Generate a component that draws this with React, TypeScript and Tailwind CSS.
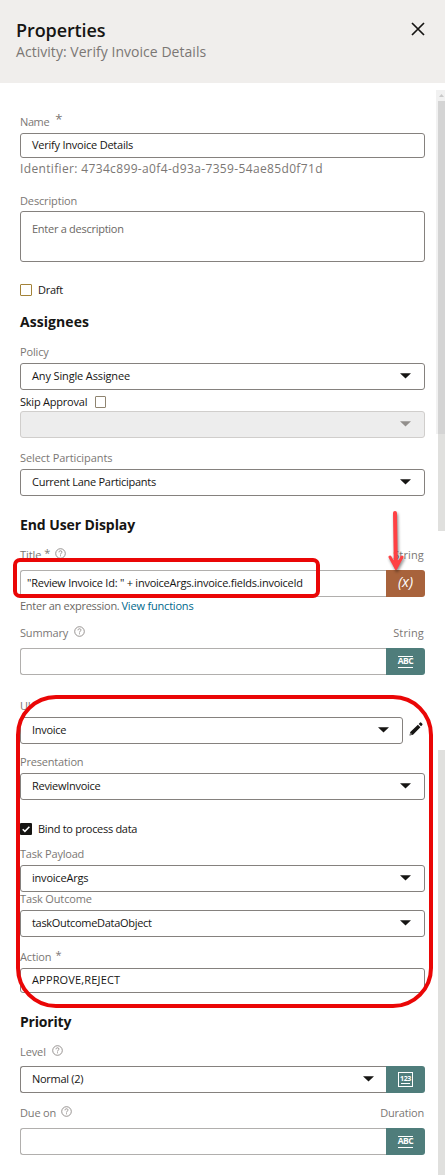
import type { ReactNode } from "react";
import clsx from "clsx";

function HelpIcon({ className }: { className?: string }) {
  return (
    <svg className={clsx("block h-[11px] w-[11px] shrink-0", className)} viewBox="0 0 11 11" fill="none" stroke="#85817e">
      <circle cx="5.5" cy="5.5" r="4.8" strokeWidth="0.85" />
      <path d="M4 4.3C4 3.3 4.6 2.8 5.5 2.8S7 3.3 7 4.1C7 5.1 5.5 5.2 5.5 6.5M5.5 7.3V8.3" strokeWidth="0.85" />
    </svg>
  );
}

function Caret({ className }: { className?: string }) {
  return (
    <svg className={clsx("block h-[6px] w-[11px] shrink-0", className)} viewBox="0 0 11 6" fill="currentColor">
      <path d="M0 0.2H11L5.5 5.6Z" />
    </svg>
  );
}

function Label({ children, className, type }: { children: ReactNode; className: string; type?: ReactNode }) {
  return (
    <div className={clsx("flex shrink-0 items-center justify-between text-[#7b7774]", className)}>
      <span className="flex items-center">{children}</span>
      {type && <span className="pr-[1px]">{type}</span>}
    </div>
  );
}

function Star({ className }: { className: string }) {
  return <span className={clsx("-mt-[5px] leading-none", className)}>*</span>;
}

function Field({ children, className }: { children?: ReactNode; className?: string }) {
  return (
    <div className={clsx("flex shrink-0 items-center rounded-[3px] border border-[#85817e] bg-white pb-[2px] pl-[11px]", className)}>
      {children}
    </div>
  );
}

function Select({ children, className }: { children?: ReactNode; className?: string }) {
  return (
    <Field className={clsx("h-[27px] justify-between pr-[13px]", className)}>
      <span>{children}</span>
      <Caret />
    </Field>
  );
}

function Badge({ children, className }: { children: ReactNode; className: string }) {
  return (
    <div className={clsx("flex h-[27px] w-[39px] shrink-0 items-center justify-center rounded-r-[3px]", className)}>
      {children}
    </div>
  );
}

function AbcBadge() {
  return (
    <Badge className="bg-[#4f7d7b]">
      <div className="flex h-[12px] w-[15px] items-center justify-center border-y border-white pb-px text-[8.5px] leading-none font-bold tracking-[-0.5px] text-white">
        ABC
      </div>
    </Badge>
  );
}

function Heading({ children, className }: { children: ReactNode; className: string }) {
  return <h2 className={clsx("flex shrink-0 items-center text-[14px] font-bold", className)}>{children}</h2>;
}

export default function App() {
  return (
    <div className="relative flex h-[1175px] w-[445px] flex-col overflow-hidden bg-white font-['Open_Sans','Noto_Sans',sans-serif] text-[11px] leading-[14px] tracking-[-0.27px] whitespace-nowrap text-[#161513]">
      <header className="flex h-[83px] shrink-0 items-start justify-between bg-[#f0eeec] pr-[20px] pl-[16px]">
        <div className="pt-[18px]">
          <h1 className="text-[18px] leading-[24px] font-semibold tracking-[-0.1px]">Properties</h1>
          <p className="mt-px text-[14px] leading-[18px] tracking-[0.04px] text-[#7b7774]">Activity: Verify Invoice Details</p>
        </div>
        <svg className="mt-[22px] h-[14px] w-[14px]" viewBox="0 0 14 14" stroke="#161513" strokeWidth="1.7">
          <path d="M1 1L13 13M13 1L1 13" />
        </svg>
      </header>

      <div className="flex h-[1092px]">
        <main className="ml-[20px] flex w-[405px] shrink-0 flex-col">
          <Label className="mt-[28px] h-[22px]">
            <span className="tracking-[-0.4px]">Name</span>
            <Star className="ml-[6px] text-[13px]" />
          </Label>
          <Field className="h-[25px] tracking-[-0.23px]">Verify Invoice Details</Field>
          <div className="flex h-[22px] shrink-0 items-center text-[12px] tracking-[0.35px] text-[#7b7774]">
            Identifier: 4734c899-a0f4-d93a-7359-54ae85d0f71d
          </div>

          <Label className="mt-[11px] h-[20px] tracking-[-0.14px]">Description</Label>
          <Field className="h-[51px] items-start pt-[10px] text-[#6b6764]">Enter a description</Field>

          <div className="mt-[22px] flex h-[12px] shrink-0 items-center">
            <span className="h-[12px] w-[12px] rounded-[1px] border border-[#a38238]" />
            <span className="ml-[6px]">Draft</span>
          </div>

          <Heading className="mt-[16px] h-[20px] tracking-[0.06px]">Assignees</Heading>
          <Label className="mt-[9px] h-[22px] tracking-[-0.16px]">Policy</Label>
          <Select><span className="tracking-[-0.14px]">Any Single Assignee</span></Select>
          <div className="flex h-[21px] shrink-0 items-center pt-[3px]">
            <span className="tracking-[-0.22px]">Skip Approval</span>
            <span className="ml-[8px] h-[12px] w-[11px] rounded-[1px] border border-[#8f8470]" />
          </div>
          <Select className="border-[#d0cecc]! bg-[#ededed]! text-[#928f8c]" />
          <Label className="mt-[9px] h-[22px] tracking-[-0.08px]">Select Participants</Label>
          <Select>Current Lane Participants</Select>

          <Heading className="mt-[19px] h-[20px] tracking-[-0.09px]">End User Display</Heading>
          <Label className="mt-[5px] h-[30px]" type={<span className="tracking-[0.15px]">String</span>}>
            <span className="tracking-[-0.1px]">Title</span>
            <Star className="ml-[3px] text-[11px]" />
            <HelpIcon className="-mt-[4px] ml-[5px]" />
          </Label>
          <div className="flex shrink-0">
            <Field className="h-[27px] w-[366px] rounded-r-none border-r-0 border-[#b1afad]! pl-[6px]! tracking-[-0.24px]">
              "Review Invoice Id: " + invoiceArgs.invoice.fields.invoiceId
            </Field>
            <Badge className="bg-[#a8633c] pb-[3px] text-[14.5px] font-medium tracking-[-0.1px] text-white italic">(x)</Badge>
          </div>
          <div className="flex h-[18px] shrink-0 items-center text-[#6b6764]">
            <span>Enter an expression.</span>
            <a className="ml-[2px] tracking-[-0.19px] text-[#00688c]">View functions</a>
          </div>
          <Label className="mt-[3px] h-[30px]" type={<span className="tracking-[0.15px]">String</span>}>
            <span className="tracking-[-0.16px]">Summary</span>
            <HelpIcon className="-mt-[3px] ml-[6px]" />
          </Label>
          <div className="flex shrink-0">
            <Field className="h-[27px] w-[366px] rounded-r-none border-r-0 border-[#b1afad]!" />
            <AbcBadge />
          </div>

          <Label className="mt-[20px] h-[22px]">UI</Label>
          <div className="flex shrink-0 items-center">
            <Select className="w-[383px]">Invoice</Select>
            <svg className="-mt-[3px] ml-[6px] h-[14px] w-[14px]" viewBox="0 0 14 14" fill="#161513">
              <path d="M0.5 13.5L1.3 10L8.9 2.7L11.4 5.2L4 12.8ZM9.7 2L11.1 0.6Q11.7 0.1 12.3 0.7L13.3 1.8Q13.8 2.4 13.3 2.9L12 4.3Z" />
              <path d="M1.2 12.8L1.7 11.1L2.9 12.3Z" fill="white" />
            </svg>
          </div>
          <Label className="mt-[7px] h-[22px] tracking-[-0.18px]">Presentation</Label>
          <Select><span className="tracking-[-0.29px]">ReviewInvoice</span></Select>

          <div className="mt-[23px] flex h-[12px] shrink-0 items-center">
            <svg className="h-[12px] w-[12px]" viewBox="0 0 11 11" fill="none">
              <rect width="11" height="11" rx="1" fill="#161513" />
              <path d="M2.5 5.7L4.5 7.7L8.6 3.4" stroke="white" strokeWidth="1.4" />
            </svg>
            <span className="ml-[6px] tracking-[-0.3px]">Bind to process data</span>
          </div>
          <Label className="mt-[8px] h-[22px] tracking-[-0.2px]">Task Payload</Label>
          <Select><span className="tracking-[-0.21px]">invoiceArgs</span></Select>
          <Label className="h-[18px] pb-[4px] tracking-[-0.14px]">Task Outcome</Label>
          <Select><span className="tracking-[-0.31px]">taskOutcomeDataObject</span></Select>
          <Label className="mt-[9px] h-[22px]">
            <span className="tracking-[-0.14px]">Action</span>
            <Star className="ml-[4px] text-[11px]" />
          </Label>
          <Field className="h-[25px] tracking-[0.16px]">APPROVE,REJECT</Field>

          <Heading className="mt-[19px] h-[20px] tracking-[-0.2px]">Priority</Heading>
          <Label className="mt-[6px] h-[28px]">
            <span className="tracking-[-0.1px]">Level</span>
            <HelpIcon className="-mt-[4px] ml-[6px]" />
          </Label>
          <div className="flex shrink-0">
            <Select className="w-[366px] rounded-r-none border-r-0 pr-[12px]!"><span className="tracking-[-0.3px]">Normal (2)</span></Select>
            <Badge className="bg-[#4f7d7b]">
              <div className="flex h-[15px] w-[15px] flex-col items-center justify-center border border-white text-[7px] leading-[7px] font-bold tracking-[-0.4px] text-white">
                123
                <span className="mt-px h-px w-[9px] bg-white" />
              </div>
            </Badge>
          </div>
          <Label className="mt-[5px] h-[30px]" type={<span className="tracking-[-0.2px]">Duration</span>}>
            <span className="tracking-[-0.16px]">Due on</span>
            <HelpIcon className="-mt-[4px] ml-[5px]" />
          </Label>
          <div className="flex shrink-0">
            <Field className="h-[27px] w-[366px] rounded-r-none border-r-0 border-[#b1afad]!" />
            <AbcBadge />
          </div>
        </main>

        <div className="ml-auto flex w-[9px] flex-col pt-[7px]">
          <div className="flex h-[11px] items-center justify-center bg-[#f1f1f1] pl-[2px]">
            <svg className="h-[3px] w-[5px]" viewBox="0 0 5 3" fill="#c9c9c9">
              <path d="M0 3L2.5 0L5 3Z" />
            </svg>
          </div>
          <div className="h-[333px] border-l-2 border-[#f1f1f1] bg-[#d4d4d4]" />
          <div className="ml-[2px] h-[97px] bg-[#e0e0de]" />
          <div className="mt-[219px] ml-[2px] flex-1 bg-[#e0e0de]" />
        </div>
      </div>

      <div className="absolute top-[558px] left-[13px] h-[40px] w-[307px] rounded-[7px] border-4 border-[#ea0606]" />
      <div className="absolute top-[695px] left-[16px] h-[313px] w-[417px] rounded-[40px] border-4 border-[#ea0606]" />
      <svg className="absolute top-[508px] left-[384px] h-[68px] w-[26px] drop-shadow-[1px_2px_1.5px_rgba(0,0,0,0.45)]" viewBox="0 0 26 68" fill="none" stroke="#ff4144" strokeLinecap="round">
        <path d="M11 5L11.8 56" strokeWidth="4" />
        <path d="M6 49L12 60L18 49" strokeWidth="3" strokeLinejoin="round" />
        <path d="M8 53L12 62L16 53Z" fill="#ff4144" strokeWidth="1" />
      </svg>
    </div>
  );
}
